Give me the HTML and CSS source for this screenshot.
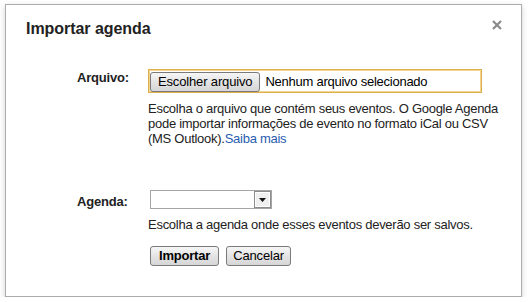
FILE: index.html
```html
<!DOCTYPE html>
<html lang="pt">
<head>
<meta charset="utf-8">
<title>Importar agenda</title>
<link rel="stylesheet" href="styles.css">
</head>
<body>
<div class="dialog">
  <h1 class="title">Importar agenda</h1>
  <span class="close" aria-label="Fechar">
    <svg width="10" height="10" viewBox="0 0 10 10"><path d="M1 1 L9 9 M9 1 L1 9" stroke="#8a8a8a" stroke-width="2.2" fill="none"/></svg>
  </span>
  <div class="form">
    <div class="label label-file">Arquivo:</div>
    <div class="field">
      <div class="file-box">
        <span class="btn btn-file">Escolher arquivo</span><span class="file-name">Nenhum arquivo selecionado</span>
      </div>
      <p class="help help-file">Escolha o arquivo que contém seus eventos. O Google Agenda<br>pode importar informações de evento no formato iCal ou CSV<br>(MS Outlook).<a class="link" href="#">Saiba mais</a></p>
    </div>
    <div class="label label-cal">Agenda:</div>
    <div class="field field-cal">
      <div class="select"><span class="select-arrow"><svg width="7" height="4" viewBox="0 0 7 4"><path d="M0 0 H7 L3.5 4 Z" fill="#111"/></svg></span></div>
      <p class="help">Escolha a agenda onde esses eventos deverão ser salvos.</p>
      <div class="actions">
        <span class="btn btn-primary">Importar</span>
        <span class="btn btn-cancel">Cancelar</span>
      </div>
    </div>
  </div>
</div>
</body>
</html>
```

FILE: styles.css
```css
html, body {
  margin: 0;
  padding: 0;
  background: #ffffff;
}
body {
  font-family: "Liberation Sans", Arial, sans-serif;
  font-size: 13px;
  color: #222;
}
.dialog {
  position: relative;
  box-sizing: border-box;
  margin: 4px 0 0 5px;
  width: 517px;
  height: 293px;
  border: 1px solid #acacac;
  background: #fff;
  box-shadow: 0 2px 6px rgba(0, 0, 0, 0.18);
}
.title {
  margin: 0;
  padding: 14px 0 0 20px;
  font-size: 16px;
  line-height: 19px;
  font-weight: bold;
  color: #222;
  letter-spacing: -0.05px;
}
.close {
  position: absolute;
  top: 15px;
  right: 19px;
  width: 10px;
  height: 10px;
  display: block;
}
.close svg { display: block; }
.form {
  display: grid;
  grid-template-columns: 71px 1fr;
  margin: 31px 0 0 71px;
  row-gap: 44px;
}
.label {
  font-weight: bold;
  line-height: 15px;
  color: #222;
  letter-spacing: -0.2px;
}
.label-file { padding-top: 1px; }
.label-cal { padding-top: 4px; }
.field { display: flex; flex-direction: column; align-items: flex-start; }
.file-box {
  box-sizing: border-box;
  width: 334px;
  height: 24px;
  border: 1px solid #dcae4e;
  box-shadow: inset 0 0 0 1px #f2d58f;
  padding: 2px 0 0 1px;
  display: flex;
  align-items: flex-start;
}
.btn {
  box-sizing: border-box;
  display: inline-block;
  height: 20px;
  line-height: 16px;
  padding: 1px 7px 1px;
  border: 1px solid #7a7a7a;
  border-radius: 3px;
  background: linear-gradient(#f6f6f6, #e4e4e4 50%, #d6d6d6);
  color: #000;
  font-size: 13px;
  white-space: nowrap;
  letter-spacing: -0.15px;
}
.file-name {
  margin-left: 5px;
  line-height: 16px;
  padding-top: 2px;
  color: #000;
  letter-spacing: -0.25px;
}
.help {
  margin: 8px 0 0;
  line-height: 15px;
  color: #222;
  letter-spacing: -0.27px;
}
.link { color: #2a5db0; text-decoration: none; }
.select {
  box-sizing: border-box;
  margin-left: 2px;
  width: 122px;
  height: 19px;
  border: 1px solid #a5a5a5;
  background: #fff;
  display: flex;
  justify-content: flex-end;
}
.select-arrow {
  box-sizing: border-box;
  width: 17px;
  height: 17px;
  border: 1px solid #8c8c8c;
  box-shadow: inset 0 0 0 1px #fff;
  background: #efefef;
  display: flex;
  align-items: center;
  justify-content: center;
}
.select-arrow svg { display: block; }
.actions {
  margin: 14px 0 0 2px;
  display: flex;
  gap: 7px;
}
.btn-primary {
  font-weight: bold;
  padding: 1px 8px;
  letter-spacing: -0.2px;
}
.btn-cancel { padding: 1px 6px; }
```
